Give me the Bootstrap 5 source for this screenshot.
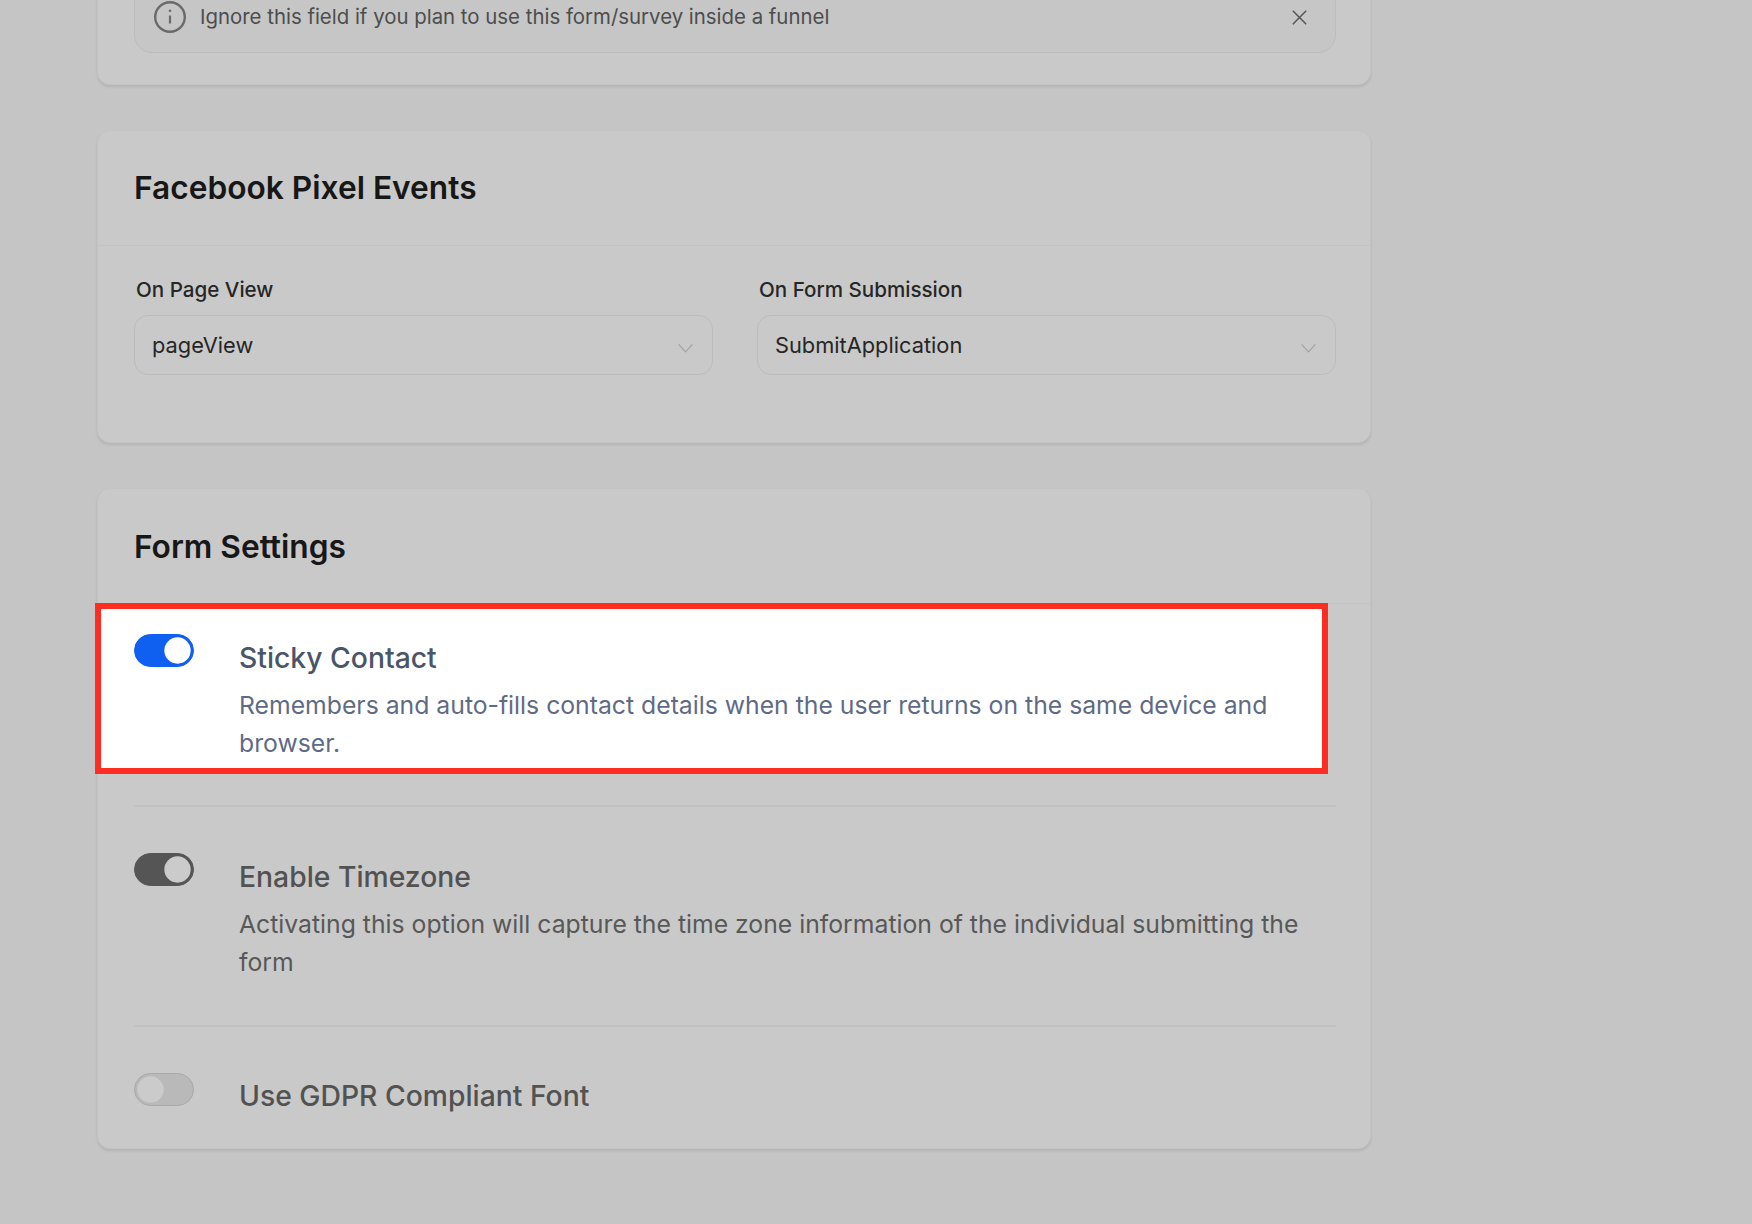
<!DOCTYPE html>
<html lang="en">
<head>
<meta charset="utf-8">
<title>Form Settings</title>
<link href="https://cdn.jsdelivr.net/npm/bootstrap@5.3.0/dist/css/bootstrap.min.css" rel="stylesheet">
<style>
html,body{height:1224px;overflow:hidden;}
body{background:#c5c5c5;font-family:"Inter","Liberation Sans",sans-serif;color:#1b1b1b;}
.page-wrap{width:1274px;margin:-61px 0 0 97px;display:flex;flex-direction:column;gap:45px;}
.panel{background:#c9c9c9;border:1px solid #c4c4c4;border-radius:13px;box-shadow:0 2px 3px rgba(0,0,0,.09);}
.panel-top{padding:1px 36px 0;height:115px;display:flex;align-items:center;background:transparent;border-bottom:1px solid #c3c3c3;}
.panel-top h2{margin:0;font-size:31.7px;font-weight:600;color:#171717;}
.settings-top h2{padding-top:2px;}
.notice-card{padding:41px 34px 31px 36px;}
.notice{margin:0;padding:0 20px 0 18px;height:72px;background:#c6c6c6;border:1px solid #bcbcbc;border-radius:18px;display:flex;align-items:center;gap:13px;font-size:20.4px;color:#4d4d4d;}
.notice .btn-close{margin-left:auto;padding:0;width:17px;height:17px;opacity:1;box-shadow:none;margin-right:7px;background:url("data:image/svg+xml,%3Csvg xmlns='http://www.w3.org/2000/svg' viewBox='0 0 16 16'%3E%3Cpath fill='none' stroke='%23555' stroke-width='1.4' d='M1 1l14 14M15 1L1 15'/%3E%3C/svg%3E") center/17px no-repeat;}
.pixel-body{padding:27px 34px 67px 36px;}
.pixel-body .form-label{font-size:20.6px;font-weight:500;color:#262626;margin:0 0 8px 2px;line-height:34px;display:block;}
.pixel-body .form-select{height:60px;background-color:#c9c9c9;border:1px solid #bcbcbc;border-radius:14px;padding:0 40px 0 17px;font-size:21.8px;color:#262626;box-shadow:none;background-position:right 18px top 22px;background-size:17px;background-image:url("data:image/svg+xml,%3Csvg xmlns='http://www.w3.org/2000/svg' viewBox='0 0 16 16'%3E%3Cpath fill='none' stroke='%23a3a3a3' stroke-width='1.2' d='M1.5 6l6.5 7 6.5-7'/%3E%3C/svg%3E");}
.gutter-44{--bs-gutter-x:44px;}
.settings-body{padding:0 34px 0 36px;}
.switch-row{display:flex;gap:45px;align-items:flex-start;}
.spot{background:#fff;border:6px solid #fe2d20;margin:-1px 8px 0 -39px;padding:25px 20px 6px 33px;height:171px;}
.plain{padding:46px 0 44px;border-top:2px solid #c1c1c1;}
.first-plain{margin-top:31px;}
.last-plain{padding-bottom:34px;}
.last-plain .opt-title{margin-top:5px;}
.switch-row .form-check{margin:0;padding:0;min-height:0;flex:none;line-height:0;}
.switch-row .form-check-input{margin:0;width:60px;height:33px;float:none;border-radius:17px;box-shadow:none;opacity:1;}
.switch-row .switch-on{background-color:#0f5ff0;border-color:#0f5ff0;background-position:right center;background-image:url("data:image/svg+xml,%3Csvg xmlns='http://www.w3.org/2000/svg' viewBox='-4 -4 8 8'%3E%3Ccircle r='3.4' fill='%23fff'/%3E%3C/svg%3E");}
.switch-row .switch-dim{background-color:#555;border-color:#555;background-position:right center;background-image:url("data:image/svg+xml,%3Csvg xmlns='http://www.w3.org/2000/svg' viewBox='-4 -4 8 8'%3E%3Ccircle r='3.4' fill='%23cbcbcb'/%3E%3C/svg%3E");}
.switch-row .switch-off{background-color:#b9b9b9;border-color:#a8a8a8;background-position:left center;background-image:url("data:image/svg+xml,%3Csvg xmlns='http://www.w3.org/2000/svg' viewBox='-4 -4 8 8'%3E%3Ccircle r='3.4' fill='%23cbcbcb'/%3E%3C/svg%3E");}
.opt-title{font-size:28.3px;font-weight:500;line-height:36px;margin:6px 0 10px;color:#525252;}
.opt-desc{font-size:24.75px;line-height:38px;margin:0;color:#585858;}
.spot .opt-title{color:#4a5568;}
.spot .opt-desc{color:#5f6b85;}
</style>
</head>
<body>
<div class="page-wrap">
  <div class="card panel notice-card">
    <div class="alert notice" role="alert">
      <svg width="34" height="34" viewBox="0 0 34 34" fill="none" stroke="#6a6a6a" stroke-width="2.4"><circle cx="17" cy="17" r="14.8"/><path d="M17 15.5v8" stroke-width="2.2"/><circle cx="17" cy="10.8" r="1.3" fill="#6a6a6a" stroke="none"/></svg>
      <span>Ignore this field if you plan to use this form/survey inside a funnel</span>
      <button type="button" class="btn-close" aria-label="Close"></button>
    </div>
  </div>

  <div class="card panel">
    <div class="panel-top"><h2>Facebook Pixel Events</h2></div>
    <div class="pixel-body">
      <div class="row gutter-44">
        <div class="col-6">
          <label class="form-label">On Page View</label>
          <select class="form-select"><option>pageView</option></select>
        </div>
        <div class="col-6">
          <label class="form-label">On Form Submission</label>
          <select class="form-select"><option>SubmitApplication</option></select>
        </div>
      </div>
    </div>
  </div>

  <div class="card panel">
    <div class="panel-top settings-top"><h2>Form Settings</h2></div>
    <div class="settings-body">
      <div class="switch-row spot">
        <div class="form-check form-switch"><input class="form-check-input switch-on" type="checkbox" checked></div>
        <div>
          <p class="opt-title">Sticky Contact</p>
          <p class="opt-desc">Remembers and auto-fills contact details when the user returns on the same device and browser.</p>
        </div>
      </div>
      <div class="switch-row plain first-plain">
        <div class="form-check form-switch"><input class="form-check-input switch-dim" type="checkbox" checked></div>
        <div>
          <p class="opt-title">Enable Timezone</p>
          <p class="opt-desc">Activating this option will capture the time zone information of the individual submitting the form</p>
        </div>
      </div>
      <div class="switch-row plain last-plain">
        <div class="form-check form-switch"><input class="form-check-input switch-off" type="checkbox"></div>
        <div>
          <p class="opt-title mb-0">Use GDPR Compliant Font</p>
        </div>
      </div>
    </div>
  </div>
</div>
<script src="https://cdn.jsdelivr.net/npm/bootstrap@5.3.0/dist/js/bootstrap.bundle.min.js"></script>
</body>
</html>
